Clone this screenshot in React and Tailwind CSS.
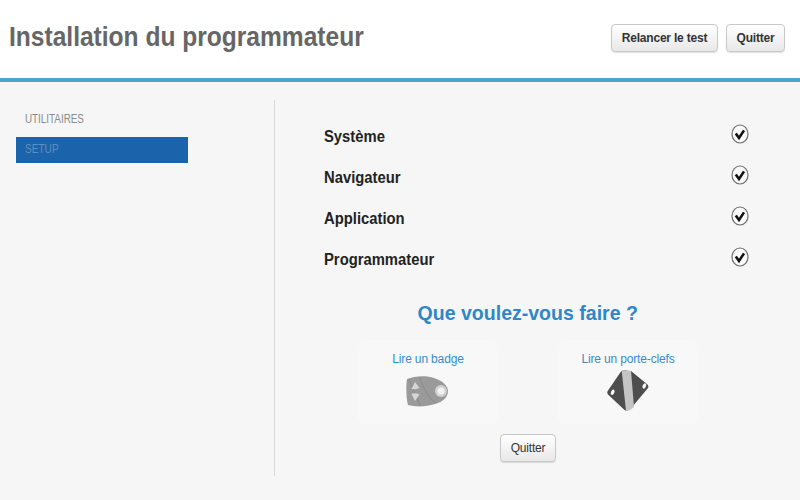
import React from 'react';

const font = { fontFamily: '"Liberation Sans", Arial, sans-serif' };
const checks = ['Système', 'Navigateur', 'Application', 'Programmateur'];

const btn = 'h-[28px] rounded-[4px] border border-[#c8c8c8] bg-gradient-to-b from-[#ffffff] to-[#e8e8e8] text-[12px] tracking-[-0.2px] text-[#333333] shadow-[0_1px_1px_rgba(0,0,0,0.12)]';

function CheckIcon() {
  return (
    <svg width="18" height="20" viewBox="0 0 18 20" className="-mt-[5px]">
      <ellipse cx="9" cy="10" rx="8" ry="9" fill="#fafafa" stroke="#6f6f6f" strokeWidth="1.2" />
      <path d="M4.8 9.4 L8 14 L13 6.4" fill="none" stroke="#111111" strokeWidth="2.6" />
    </svg>
  );
}

function BadgeIcon() {
  return (
    <svg width="42" height="31" viewBox="0 0 42 31">
      <path d="M1 3 C8 0 20 -1 28 2 C37 5 42 10 42 15 C42 21 37 26 29 28 C20 31 9 31 2 29 C0 22 0 9 1 3 Z" fill="#9a9a9a" />
      <path d="M3 3 L14 29 M13 1 C18 12 22 22 30 27" fill="none" stroke="#858585" strokeWidth="0.8" />
      <path d="M5.5 13 L9 6 L13.5 12 Q9 14 5.5 13 Z" fill="#d6d6d6" />
      <path d="M5.5 18 Q9 16.5 13.5 18.5 L9 25 Z" fill="#d6d6d6" />
      <circle cx="35" cy="15" r="6" fill="#d2d2d2" />
      <circle cx="35" cy="15" r="3.5" fill="#f2f2f2" />
    </svg>
  );
}

function KeyfobIcon() {
  return (
    <svg width="42" height="41" viewBox="0 0 42 41">
      <path d="M14 1.5 Q15 0.5 17 0.5 L24 1 L40.5 14.5 Q42 16.5 41 18 L23 39.5 Q20 41.5 17.5 40 L1 24.5 Q-0.5 22.5 1 20.5 Z" fill="#4d4d4d" />
      <path d="M14.7 1 L24 1 L27 37 L23 40 L19 41 Z" fill="#c4c4c4" />
      <ellipse cx="37.3" cy="16" rx="1.7" ry="2.8" transform="rotate(25 37.3 16)" fill="#f5f5f5" />
      <ellipse cx="5.7" cy="22.3" rx="1.7" ry="2.8" transform="rotate(25 5.7 22.3)" fill="#f5f5f5" />
    </svg>
  );
}

export default function App() {
  return (
    <div style={font} className="w-[800px] h-[500px] overflow-hidden bg-[#f6f6f6]">
      <header className="h-[82px] bg-white border-b-[4px] border-[#4aa5cf] flex items-center justify-between pl-[9px] pr-[15px]">
        <h1 className="text-[28px] font-bold text-[#666666] -mt-[4px] whitespace-nowrap origin-left scale-x-[0.877]">Installation du programmateur</h1>
        <div className="flex gap-[8px] -mt-[2px]">
          <button className={`${btn} w-[107px] font-bold`}>Relancer le test</button>
          <button className={`${btn} w-[59px] font-bold`}>Quitter</button>
        </div>
      </header>

      <div className="flex pt-[18px]">
        <aside className="w-[275px] h-[376px] border-r border-[#d9d9d9] pl-[16px] pt-[11px]">
          <div className="pl-[9px] h-[26px] -mt-[1px]">
            <span className="block text-[12px] text-[#8a8a8a] origin-left scale-x-[0.82]">UTILITAIRES</span>
          </div>
          <div className="w-[172px] h-[26px] mt-[1px] bg-[#1b63ab] pl-[9px] flex items-center">
            <span className="text-[12px] -mt-[2px] text-[#5f8fc0] origin-left scale-x-[0.84]">SETUP</span>
          </div>
        </aside>

        <main className="flex-1 pt-[16px]">
          <div className="pl-[49px] pr-[51px]">
            {checks.map((label) => (
              <div key={label} className="h-[41px] flex items-center justify-between">
                <span className="text-[16px] font-bold text-[#222222] origin-left scale-x-[0.925]">{label}</span>
                <CheckIcon />
              </div>
            ))}
          </div>

          <h2 className="mt-[20px] text-center text-[21px] font-bold text-[#2e87c8] leading-[26px] pr-[21px] scale-x-[0.93]">Que voulez-vous faire ?</h2>

          <div className="mt-[14px] flex justify-center gap-[60px] pr-[19px]">
            <div className="w-[140px] h-[84px] rounded-[8px] bg-[#f8f8f8] flex flex-col items-center pt-[11px]">
              <span className="text-[12px] tracking-[-0.15px] leading-[16px] text-[#3a8bc8]">Lire un badge</span>
              <div className="mt-[9px] -ml-[2px]"><BadgeIcon /></div>
            </div>
            <div className="w-[140px] h-[84px] rounded-[8px] bg-[#f8f8f8] flex flex-col items-center pt-[11px]">
              <span className="text-[12px] tracking-[-0.15px] leading-[16px] text-[#3a8bc8]">Lire un porte-clefs</span>
              <div className="mt-[3px]"><KeyfobIcon /></div>
            </div>
          </div>

          <div className="mt-[10px] flex justify-center pr-[19px]">
            <button className={`${btn} w-[56px]`}>Quitter</button>
          </div>
        </main>
      </div>
    </div>
  );
}
